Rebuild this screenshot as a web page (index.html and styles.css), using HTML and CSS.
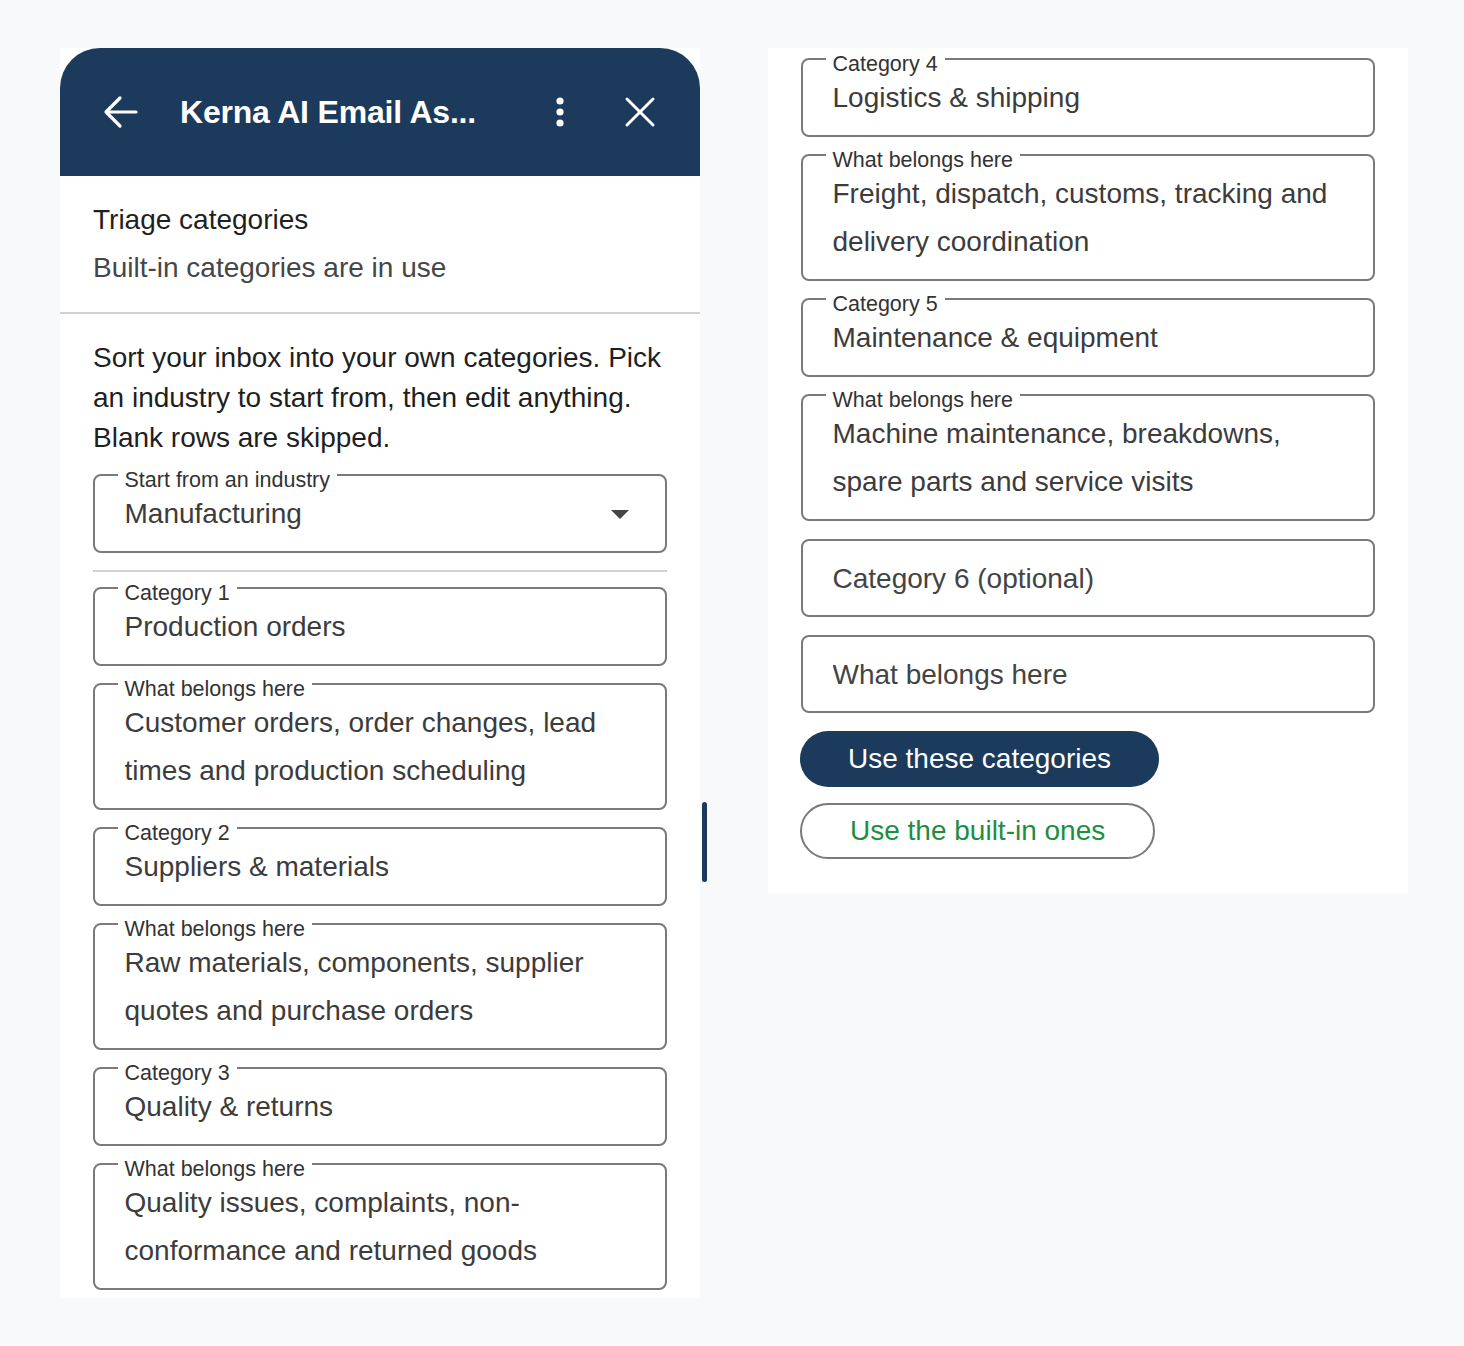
FILE: index.html
```html
<!DOCTYPE html>
<html>
  <head>
    <meta charset="utf-8" />
    <title>Kerna AI Email Assistant</title>
    <link rel="stylesheet" href="styles.css">
  </head>
  <body>
    <!-- panneau gauche : haut de la carte -->
    <div class="card card-left">
      <div class="header">
        <svg class="icon-back" width="36" height="36" viewBox="0 0 36 36">
          <path d="M34 18H4M18 4L4 18L18 32" fill="none" stroke="#fff" stroke-width="3.2" stroke-linecap="round" stroke-linejoin="round" />
        </svg>
        <div class="title">Kerna AI Email As...</div>
        <svg class="icon-more" width="24" height="36" viewBox="0 0 24 36">
          <circle cx="12" cy="7" r="3.6" fill="#fff" />
          <circle cx="12" cy="18" r="3.6" fill="#fff" />
          <circle cx="12" cy="29" r="3.6" fill="#fff" />
        </svg>
        <svg class="icon-close" width="36" height="36" viewBox="0 0 36 36">
          <path d="M5 5L31 31M31 5L5 31" fill="none" stroke="#fff" stroke-width="3" stroke-linecap="round" />
        </svg>
      </div>

      <div class="section-top">
        <div class="section-title">Triage categories</div>
        <div class="section-sub">Built-in categories are in use</div>
      </div>
      <div class="rule"></div>

      <div class="body">
        <p class="intro">Sort your inbox into your own categories. Pick an industry to start from, then edit anything. Blank rows are skipped.</p>

        <fieldset class="field field-select">
          <legend>Start from an industry</legend>
          <div class="select-row">
            <span class="select-value">Manufacturing</span>
            <svg width="18" height="9" viewBox="0 0 18 9"><path d="M0 0H18L9 9Z" fill="#444" /></svg>
          </div>
        </fieldset>

        <div class="rule rule-inner"></div>

        <div class="fields">
          <fieldset class="field">
            <legend>Category 1</legend>
            <input class="field-input" value="Production orders">
          </fieldset>
          <fieldset class="field">
            <legend>What belongs here</legend>
            <textarea class="field-input multi" rows="2">Customer orders, order changes, lead times and production scheduling</textarea>
          </fieldset>
          <fieldset class="field">
            <legend>Category 2</legend>
            <input class="field-input" value="Suppliers &amp; materials">
          </fieldset>
          <fieldset class="field">
            <legend>What belongs here</legend>
            <textarea class="field-input multi" rows="2">Raw materials, components, supplier quotes and purchase orders</textarea>
          </fieldset>
          <fieldset class="field">
            <legend>Category 3</legend>
            <input class="field-input" value="Quality &amp; returns">
          </fieldset>
          <fieldset class="field">
            <legend>What belongs here</legend>
            <textarea class="field-input multi" rows="2">Quality issues, complaints, non-conformance and returned goods</textarea>
          </fieldset>
        </div>
      </div>
      <div class="scroll-thumb"></div>
    </div>

    <!-- panneau droit : bas de la carte -->
    <div class="card card-right">
      <div class="body">
        <div class="fields fields-scrolled">
          <fieldset class="field">
            <legend>Category 4</legend>
            <input class="field-input" value="Logistics &amp; shipping">
          </fieldset>
          <fieldset class="field">
            <legend>What belongs here</legend>
            <textarea class="field-input multi" rows="2">Freight, dispatch, customs, tracking and delivery coordination</textarea>
          </fieldset>
          <fieldset class="field">
            <legend>Category 5</legend>
            <input class="field-input" value="Maintenance &amp; equipment">
          </fieldset>
          <fieldset class="field">
            <legend>What belongs here</legend>
            <textarea class="field-input multi" rows="2">Machine maintenance, breakdowns, spare parts and service visits</textarea>
          </fieldset>
          <fieldset class="field field-empty">
            <input class="field-input" placeholder="Category 6 (optional)">
          </fieldset>
          <fieldset class="field field-empty">
            <input class="field-input" placeholder="What belongs here">
          </fieldset>
        </div>

        <div class="actions">
          <button class="btn btn-primary">Use these categories</button>
          <button class="btn btn-outline">Use the built-in ones</button>
        </div>
      </div>
    </div>
  </body>
</html>
```

FILE: styles.css
```css
body {
  margin: 0;
  padding: 48px 60px;
  background-color: #f8f9fb;
  font-family: "Liberation Sans", Arial, sans-serif;
  display: flex;
  align-items: flex-start;
  gap: 68px;
}

.card {
  width: 640px;
  flex-shrink: 0;
  background-color: #ffffff;
  position: relative;
}

.card-left {
  padding-bottom: 7.5px;
}

.card-right {
  padding-bottom: 34px;
  overflow: hidden;
}

/* en-tête bleu */
.header {
  height: 128px;
  background-color: #1b3a5c;
  border-radius: 40px 40px 0 0;
  display: flex;
  align-items: center;
  padding: 0 42px 0 42px;
}
.icon-back {
  flex-shrink: 0;
}
.title {
  margin-left: 42px;
  color: #ffffff;
  font-size: 32px;
  font-weight: bold;
  letter-spacing: -0.2px;
  white-space: nowrap;
}
.icon-more {
  margin-left: auto;
}
.icon-close {
  margin-left: 50px;
}

.section-top {
  padding: 20px 33px;
}
.section-title {
  font-size: 28px;
  line-height: 48px;
  color: #1f1f1f;
}
.section-sub {
  font-size: 28px;
  line-height: 48px;
  color: #444746;
}

.rule {
  height: 2px;
  background-color: #d2d2d2;
}
.rule-inner {
  margin: 16.5px 0 1.5px;
}

.body {
  padding: 0 33px;
}

.intro {
  margin: 0;
  padding-top: 24px;
  font-size: 28px;
  line-height: 40px;
  color: #1f1f1f;
}

/* champs */
.fields {
  display: flex;
  flex-direction: column;
  gap: 3px;
}
.fields-scrolled {
  margin-top: -3.7px;
}

.field {
  margin: 0;
  min-width: 0;
  border: 2px solid #7a7a7a;
  border-radius: 8px;
  padding: 0 30px 13px 29.5px;
}
.field legend {
  padding: 10px 7px 0;
  margin-left: -7px;
  font-size: 21.5px;
  line-height: 20px;
  color: #333333;
}
.field-select {
  margin-top: 2px;
}
.field-empty {
  padding-top: 14px;
  padding-bottom: 12px;
  margin-top: 15px;
}

.field-input {
  display: block;
  width: 100%;
  height: 48px;
  margin: 0;
  padding: 0;
  border: 0;
  outline: none;
  background: transparent;
  font-family: inherit;
  font-size: 28px;
  line-height: 48px;
  color: #3c3c3c;
}
.field-input::placeholder {
  color: #444444;
  opacity: 1;
}
.field-input.multi {
  height: 96px;
  resize: none;
  overflow: hidden;
}

.select-row {
  display: flex;
  align-items: center;
  justify-content: space-between;
  height: 48px;
}
.select-value {
  font-size: 28px;
  color: #3c3c3c;
}
.select-row svg {
  margin-right: 6px;
}

.scroll-thumb {
  position: absolute;
  top: 754px;
  right: -7px;
  width: 5px;
  height: 80px;
  border-radius: 3px;
  background-color: #1b3a5c;
}

/* boutons */
.actions {
  display: flex;
  flex-direction: column;
  align-items: flex-start;
  gap: 16px;
  margin-top: 17.5px;
}
.btn {
  height: 56px;
  padding: 0 48px;
  border-radius: 28px;
  font-family: inherit;
  font-size: 28px;
  cursor: pointer;
}
.btn-primary {
  background-color: #1b3a5c;
  color: #ffffff;
  border: 0;
  margin-left: -1px;
}
.btn-outline {
  background-color: #ffffff;
  color: #1e8e3e;
  border: 2px solid #7a7a7a;
  margin-left: -1px;
}
```
